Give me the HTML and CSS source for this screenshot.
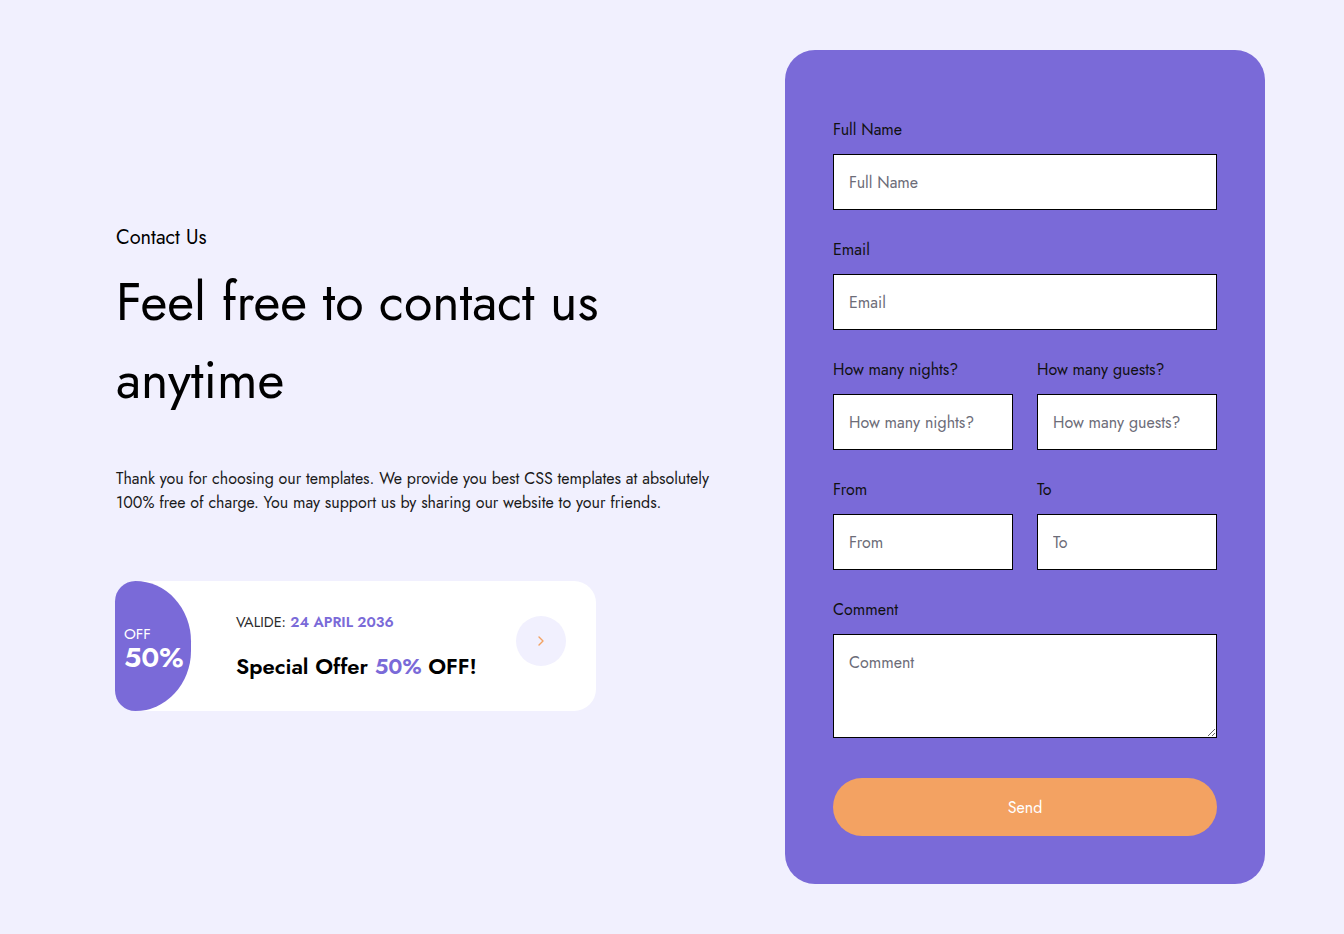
FILE: index.html
```html
<!DOCTYPE html>
<html lang="en">
<head>
<meta charset="utf-8">
<title>Contact Us</title>
<link rel="stylesheet" href="styles.css">
</head>
<body>
<main class="page">
  <section class="intro">
    <h6 class="eyebrow">Contact Us</h6>
    <h2 class="title">Feel free to contact us anytime</h2>
    <p class="lead">Thank you for choosing our templates. We provide you best CSS templates at absolutely 100% free of charge. You may support us by sharing our website to your friends.</p>
    <div class="offer">
      <div class="badge">
        <span class="badge-off">OFF</span>
        <span class="badge-num">50%</span>
      </div>
      <div class="offer-text">
        <div class="valid">VALIDE: <strong>24 APRIL 2036</strong></div>
        <div class="offer-title">Special Offer <em>50%</em> OFF!</div>
      </div>
      <a class="offer-btn" href="#">
        <svg width="8" height="12" viewBox="0 0 8 12"><path d="M2 2l4 4-4 4" fill="none" stroke="#f3a262" stroke-width="1.4" stroke-linecap="round" stroke-linejoin="round"/></svg>
      </a>
    </div>
  </section>
  <form class="form">
    <div class="group">
      <label class="label">Full Name</label>
      <input class="field" type="text" placeholder="Full Name">
    </div>
    <div class="group">
      <label class="label">Email</label>
      <input class="field" type="text" placeholder="Email">
    </div>
    <div class="row">
      <div class="group">
        <label class="label">How many nights?</label>
        <input class="field" type="text" placeholder="How many nights?">
      </div>
      <div class="group">
        <label class="label">How many guests?</label>
        <input class="field" type="text" placeholder="How many guests?">
      </div>
    </div>
    <div class="row">
      <div class="group">
        <label class="label">From</label>
        <input class="field" type="text" placeholder="From">
      </div>
      <div class="group">
        <label class="label">To</label>
        <input class="field" type="text" placeholder="To">
      </div>
    </div>
    <div class="group group-last">
      <label class="label">Comment</label>
      <textarea class="field area" placeholder="Comment"></textarea>
    </div>
    <button class="send" type="button">Send</button>
  </form>
</main>
</body>
</html>
```
FILE: styles.css
```css
* { box-sizing: border-box; }
html, body { margin: 0; padding: 0; }
body {
  background: #f1f0fe;
  font-family: "Jost", "Lato", "Open Sans", sans-serif;
  color: #000;
}
.page {
  display: flex;
  align-items: center;
  justify-content: space-between;
  padding: 50px 79px 50px 116px;
  min-height: 934px;
}
.intro {
  width: 610px;
  padding-top: 4px;
}
.eyebrow {
  margin: 0;
  font-size: 20px;
  font-weight: 400;
  line-height: 22px;
}
.title {
  margin: 14px 0 0;
  font-size: 52px;
  font-weight: 400;
  line-height: 78px;
  width: 520px;
}
.lead {
  margin: 48px 0 0;
  font-size: 16px;
  line-height: 24px;
  color: #1a1a1a;
}
.offer {
  margin: 66px 0 0 -1px;
  width: 481px;
  height: 130px;
  background: #fff;
  border-radius: 22px;
  display: flex;
  align-items: center;
}
.badge {
  width: 76px;
  height: 130px;
  flex: none;
  background: #7a6ad8;
  border-radius: 22px 60px 60px 22px / 22px 65px 65px 22px;
  color: #fff;
  display: flex;
  flex-direction: column;
  justify-content: center;
  padding-left: 9px;
  padding-top: 6px;
}
.badge-off { font-size: 15px; line-height: 17px; }
.badge-num { font-size: 28px; font-weight: 600; line-height: 30px; }
.offer-text {
  flex: 1;
  padding-left: 45px;
}
.valid {
  font-size: 14.5px;
  color: #2a2a2a;
  line-height: 20px;
}
.valid strong { color: #7a6ad8; font-weight: 600; }
.offer-title {
  margin-top: 20px;
  font-size: 22px;
  font-weight: 600;
  line-height: 28px;
}
.offer-title em { font-style: normal; color: #7a6ad8; }
.offer-btn {
  width: 50px;
  height: 50px;
  border-radius: 50%;
  background: #f1f0fe;
  display: flex;
  align-items: center;
  justify-content: center;
  margin-right: 30px;
  margin-bottom: 10px;
  flex: none;
}
.form {
  width: 480px;
  flex: none;
  background: #7a6ad8;
  border-radius: 30px;
  padding: 69px 48px 48px;
}
.row {
  display: grid;
  grid-template-columns: 1fr 1fr;
  column-gap: 24px;
}
.group { margin-bottom: 29px; }
.group-last { margin-bottom: 40px; }
.label {
  display: block;
  font-size: 16px;
  line-height: 20px;
  padding-top: 1px;
  margin-bottom: 14px;
  color: #111;
}
.field {
  display: block;
  width: 100%;
  height: 56px;
  border: 1px solid #000;
  border-radius: 0;
  background: #fff;
  padding: 0 15px;
  font-family: inherit;
  font-size: 16px;
  color: #333;
  outline: none;
}
.field::placeholder { color: #6c6c78; }
.area {
  height: 104px;
  padding-top: 16px;
  resize: vertical;
}
.send {
  display: block;
  width: 100%;
  height: 58px;
  border: 0;
  border-radius: 29px;
  background: #f3a262;
  color: #fff;
  font-family: inherit;
  font-size: 16px;
  font-weight: 400;
}
```
